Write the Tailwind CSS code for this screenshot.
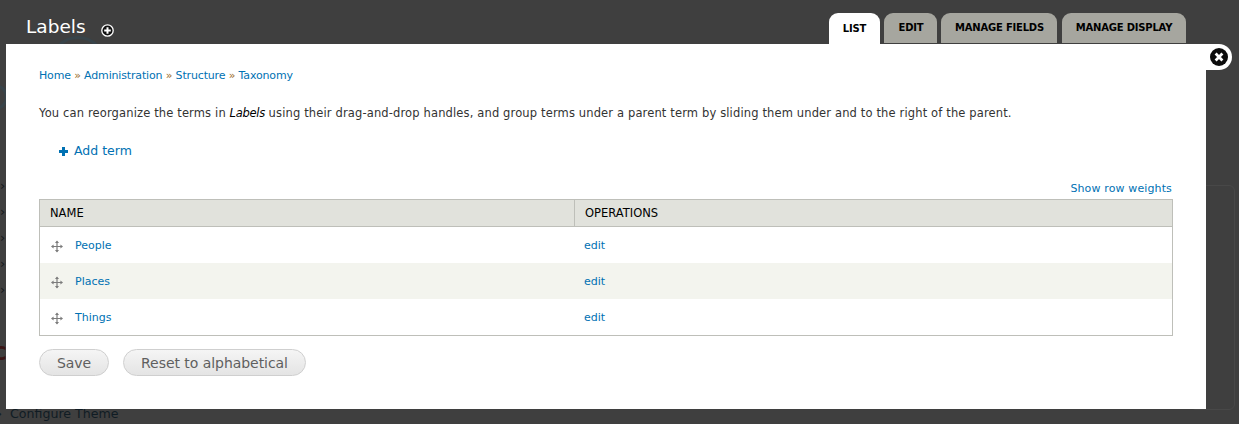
<!DOCTYPE html>
<html lang="en">
<head>
    <meta charset="UTF-8">
    <title>Labels</title>
    <script src="https://cdn.jsdelivr.net/npm/@tailwindcss/browser@4"></script>
</head>
<body class="relative w-[1239px] h-[424px] overflow-hidden bg-[#3f3f3f] font-['DejaVu_Sans',sans-serif]">

    <!-- dimmed page behind the overlay -->
    <div class="absolute left-[-3px] top-[406px] text-[12.6px] leading-[16px] text-[#101c24]">› &nbsp;Configure Theme</div>
    <div class="absolute left-[-8px] top-[341px] text-[20px] font-bold leading-[24px] text-[#3a1515]">C</div>
    <div class="absolute left-0 top-[178px] flex flex-col gap-[10px] text-[13px] leading-[16px] text-[#15191c]">
        <span>›</span><span>›</span><span>›</span><span>›</span><span>›</span>
    </div>
    <div class="absolute left-[50px] top-[36px] w-[56px] h-[56px] rounded-full border-[3px] border-[#38444a]"></div>
    <div class="absolute left-[-18px] top-[84px] w-[26px] h-[26px] rounded-full border-[3px] border-[#38444a]"></div>
    <div class="absolute left-[1190px] top-[185px] w-[45px] h-[225px] rounded-[6px] border border-[#484848]"></div>

    <!-- header -->
    <header class="relative flex items-start justify-between h-[44px] pl-[26px] pr-[53px]">
        <div class="flex items-center pt-[15px]">
            <h1 class="text-[18.5px] leading-[24px] text-white">Labels</h1>
            <svg class="ml-[15px] mt-[7px]" width="13" height="13" viewBox="0 0 13 13">
                <circle cx="6.5" cy="6.5" r="5.7" fill="#111" stroke="#fff" stroke-width="1.3"/>
                <path d="M6.5 3.2v6.6M3.2 6.5h6.6" stroke="#fff" stroke-width="2"/>
            </svg>
        </div>
        <nav class="flex gap-[4px] pt-[13px] text-[10px] tracking-[-0.2px] font-bold text-black">
            <a class="flex items-center justify-center w-[51px] h-[31px] pb-[1px] rounded-t-[9px] bg-white">LIST</a>
            <a class="flex items-center justify-center w-[53px] h-[30px] pb-[1px] pl-[1px] rounded-t-[9px] bg-[#a6a69f]">EDIT</a>
            <a class="flex items-center justify-center w-[116px] h-[30px] pb-[1px] pl-[1px] rounded-t-[9px] bg-[#a6a69f]">MANAGE FIELDS</a>
            <a class="flex items-center justify-center w-[124px] h-[30px] pb-[1px] ml-[1px] rounded-t-[9px] bg-[#a6a69f]">MANAGE DISPLAY</a>
        </nav>
    </header>

    <!-- overlay -->
    <main class="absolute left-[6px] top-[44px] w-[1200px] h-[365px] bg-white px-[33px] pt-[25px] text-[11px] text-[#333]">
        <div class="absolute left-[1190px] top-0 w-[36px] h-[26px] rounded-r-[13px] bg-white flex items-center justify-end pr-[4px]">
            <svg width="18" height="18" viewBox="0 0 18 18">
                <circle cx="9" cy="9" r="9" fill="#0c0c0c"/>
                <path d="M5.6 5.6l6.8 6.8M12.4 5.6l-6.8 6.8" stroke="#fff" stroke-width="2.8"/>
            </svg>
        </div>

        <div class="h-[14px] leading-[14px] tracking-[-0.16px] text-[#0071b3]">Home <span class="text-[#9a6b2a]">»</span> Administration <span class="text-[#9a6b2a]">»</span> Structure <span class="text-[#9a6b2a]">»</span> Taxonomy</div>

        <p class="mt-[23px] h-[14px] leading-[14px] text-[11.5px] tracking-[0.14px]">You can reorganize the terms in <em class="tracking-[-0.3px] text-black">Labels</em> using their drag-and-drop handles, and group terms under a parent term by sliding them under and to the right of the parent.</p>

        <div class="mt-[23px] ml-[20px] flex items-center h-[16px] text-[12.5px] text-[#0071b3]">
            <svg class="mr-[6px]" width="9" height="9" viewBox="0 0 9 9"><path d="M3 0h3v3h3v3H6v3H3V6H0V3h3z" fill="#0071b3"/></svg>
            Add term
        </div>

        <div class="mt-[22px] pr-[1px] h-[16px] leading-[16px] text-right tracking-[0.13px] text-[#0071b3]">Show row weights</div>

        <table class="mt-[2px] w-[1134px] border-separate border-spacing-0 border border-[#bebfb9] table-fixed">
            <thead>
                <tr class="h-[27px] text-black text-left">
                    <th class="w-[535px] pl-[10px] pt-[1px] font-normal text-[11.5px] bg-[#e1e2dc] border-b border-r border-[#bebfb9]">NAME</th>
                    <th class="pl-[10px] pt-[1px] font-normal text-[11.5px] bg-[#e1e2dc] border-b border-[#bebfb9]">OPERATIONS</th>
                </tr>
            </thead>
            <tbody class="text-[#0071b3]">
                <tr class="h-[36px]">
                    <td class="pl-[11px] pt-[2px]"><div class="flex items-center gap-[12px]"><svg width="12" height="13" viewBox="0 0 13 13"><path d="M6.5 1v11M1 6.5h11" stroke="#7c7c7c" stroke-width="1.3"/><path d="M6.5 0l2.2 2.8h-4.4zM6.5 13l2.2-2.8h-4.4zM0 6.5l2.8-2.2v4.4zM13 6.5l-2.8-2.2v4.4z" fill="#7c7c7c"/></svg>People</div></td>
                    <td class="pl-[9px] pt-[2px]">edit</td>
                </tr>
                <tr class="h-[36px] bg-[#f3f4ee]">
                    <td class="pl-[11px] pt-[2px]"><div class="flex items-center gap-[12px]"><svg width="12" height="13" viewBox="0 0 13 13"><path d="M6.5 1v11M1 6.5h11" stroke="#7c7c7c" stroke-width="1.3"/><path d="M6.5 0l2.2 2.8h-4.4zM6.5 13l2.2-2.8h-4.4zM0 6.5l2.8-2.2v4.4zM13 6.5l-2.8-2.2v4.4z" fill="#7c7c7c"/></svg>Places</div></td>
                    <td class="pl-[9px] pt-[2px]">edit</td>
                </tr>
                <tr class="h-[36px]">
                    <td class="pl-[11px] pt-[2px]"><div class="flex items-center gap-[12px]"><svg width="12" height="13" viewBox="0 0 13 13"><path d="M6.5 1v11M1 6.5h11" stroke="#7c7c7c" stroke-width="1.3"/><path d="M6.5 0l2.2 2.8h-4.4zM6.5 13l2.2-2.8h-4.4zM0 6.5l2.8-2.2v4.4zM13 6.5l-2.8-2.2v4.4z" fill="#7c7c7c"/></svg>Things</div></td>
                    <td class="pl-[9px] pt-[2px]">edit</td>
                </tr>
            </tbody>
        </table>

        <div class="mt-[13px] flex gap-[14px] text-[14px] tracking-[-0.05px] text-[#5f5f5f]">
            <button class="w-[70px] h-[27px] pt-[1px] rounded-[14px] border border-[#cfcfcf] bg-gradient-to-b from-[#f5f5f5] to-[#e4e4e4]">Save</button>
            <button class="w-[183px] h-[27px] pt-[1px] rounded-[14px] border border-[#cfcfcf] bg-gradient-to-b from-[#f5f5f5] to-[#e4e4e4]">Reset to alphabetical</button>
        </div>
    </main>
</body>
</html>
